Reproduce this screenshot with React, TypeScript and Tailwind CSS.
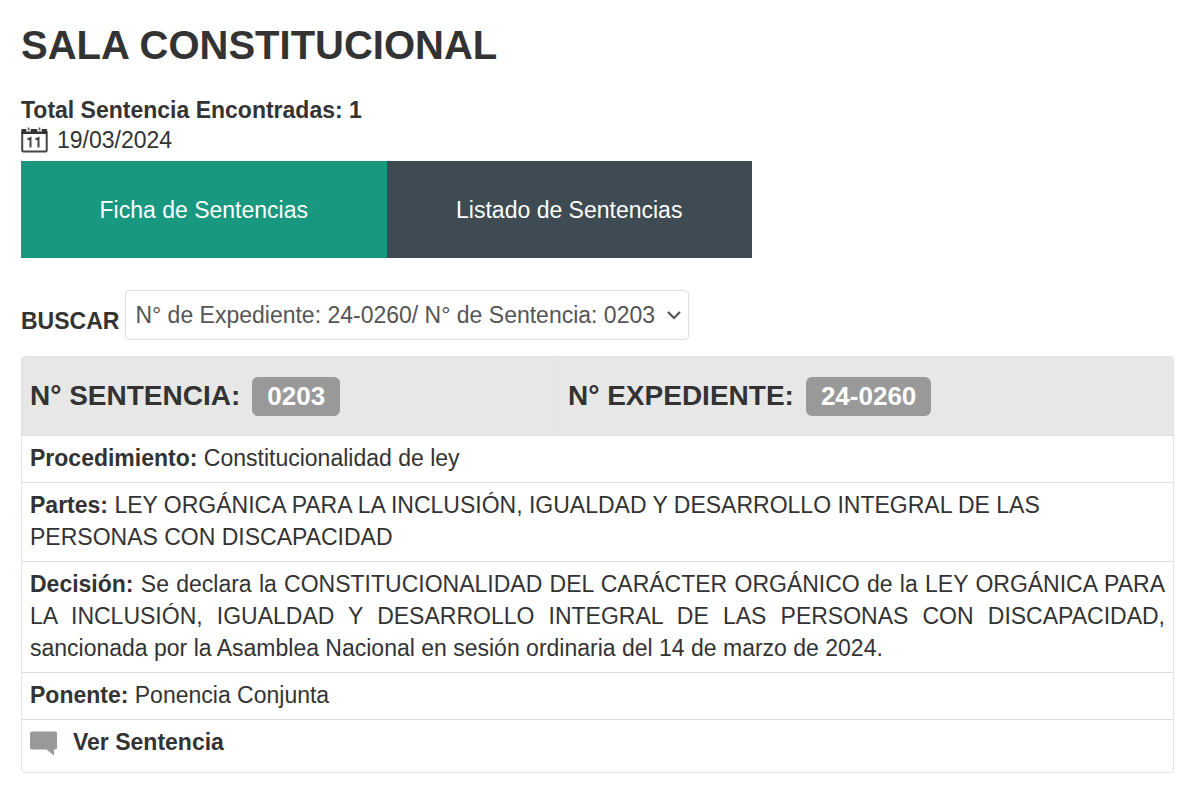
import React from 'react';

const CalendarIcon = () => {
  return (
    <svg width="28" height="26" viewBox="0 0 28 26" fill="none" aria-hidden="true">
      <rect x="1.200" y="4" width="24.500" height="20.500" rx="1" stroke="#444" strokeWidth="2" />
      <path d="M0.500 2h25.500v5H0.500z" fill="#333" />
      <path d="M7.500 0v4.500M18.500 0v4.500" stroke="#fff" strokeWidth="4.500" />
      <path d="M7.500 0.500v3M18.500 0.500v3" stroke="#666" strokeWidth="1.800" />
      <path d="M6.500 12.500l3-1.500v9.500M14.500 12.500l3-1.500v9.500" stroke="#444" strokeWidth="2" />
    </svg>
  );
};

const CommentIcon = () => {
  return (
    <svg width="27" height="27" viewBox="0 0 27 27" aria-hidden="true">
      <path d="M2 2.500h23q2 0 2 2v14q0 2-3 2v6l-7.500-6H2q-2 0-2-2v-14q0-2 2-2z" fill="#999" />
    </svg>
  );
};

const FIELDS = [
  { label: 'Procedimiento:', value: 'Constitucionalidad de ley', align: '' },
  {
    label: 'Partes:',
    value:
      'LEY ORGÁNICA PARA LA INCLUSIÓN, IGUALDAD Y DESARROLLO INTEGRAL DE LAS PERSONAS CON DISCAPACIDAD',
    align: '',
  },
  {
    label: 'Decisión:',
    value:
      'Se declara la CONSTITUCIONALIDAD DEL CARÁCTER ORGÁNICO de la LEY ORGÁNICA PARA LA INCLUSIÓN, IGUALDAD Y DESARROLLO INTEGRAL DE LAS PERSONAS CON DISCAPACIDAD, sancionada por la Asamblea Nacional en sesión ordinaria del 14 de marzo de 2024.',
    align: 'text-justify',
  },
  { label: 'Ponente:', value: 'Ponencia Conjunta', align: '' },
];

const Badge = ({ children }: { children: React.ReactNode }) => {
  return (
    <span className="ml-3 inline-block rounded-md bg-[#999] px-[15px] text-[26px] leading-[39px] text-white">
      {children}
    </span>
  );
};

const App = () => {
  return (
    <main className="pt-5 pr-[26px] pb-5 pl-[21px] font-['Liberation_Sans',Arial,sans-serif] text-[23px] leading-[30px] text-[#333]">
      <h1 className="text-[40px] leading-[50px] font-bold">SALA CONSTITUCIONAL</h1>
      <p className="mt-[25px] font-bold">Total Sentencia Encontradas: 1</p>
      <div className="flex items-center gap-2">
        <CalendarIcon />
        <span>19/03/2024</span>
      </div>

      <nav className="mt-[6px] flex w-[731px] max-w-full text-white">
        <button className="h-[97px] flex-1 cursor-pointer bg-[#18997f]">Ficha de Sentencias</button>
        <button className="h-[97px] flex-1 cursor-pointer bg-[#3e4b53]">Listado de Sentencias</button>
      </nav>

      <div className="mt-8 flex items-center gap-[6px]">
        <label htmlFor="buscar" className="pt-3 font-bold">
          BUSCAR
        </label>
        <div className="relative">
          <select
            id="buscar"
            className="h-[50px] w-[564px] appearance-none rounded-sm border border-[#ddd] bg-white pl-[9px] text-[#555]"
          >
            <option>N° de Expediente: 24-0260/ N° de Sentencia: 0203</option>
          </select>
          <svg
            className="pointer-events-none absolute top-5 right-2"
            width="14"
            height="10"
            viewBox="0 0 14 10"
            fill="none"
            aria-hidden="true"
          >
            <path d="M1 2l6 6 6-6" stroke="#555" strokeWidth="2.200" />
          </svg>
        </div>
      </div>

      <table className="mt-4 w-full border-separate border-spacing-0 rounded-sm border border-[#e3e3e3]">
        <tbody>
          <tr className="bg-[#e7e7e7] text-left text-[28px]">
            <th className="h-[78px] w-[538px] border-r border-[#e3e3e3] px-2">
              N° SENTENCIA:<Badge>0203</Badge>
            </th>
            <th className="px-2">
              N° EXPEDIENTE:<Badge>24-0260</Badge>
            </th>
          </tr>
          {FIELDS.map((field) => (
            <tr key={field.label}>
              <td colSpan={2} className={`border-t border-[#ddd] px-2 pt-[6px] pb-2 leading-8 ${field.align}`}>
                <strong>{field.label}</strong> {field.value}
              </td>
            </tr>
          ))}
          <tr>
            <td colSpan={2} className="h-[53px] border-t border-[#ddd] px-2 pt-[6px] align-top leading-8">
              <a href="#sentencia" className="flex items-center gap-4 font-bold">
                <CommentIcon />
                Ver Sentencia
              </a>
            </td>
          </tr>
        </tbody>
      </table>
    </main>
  );
};

export default App;
